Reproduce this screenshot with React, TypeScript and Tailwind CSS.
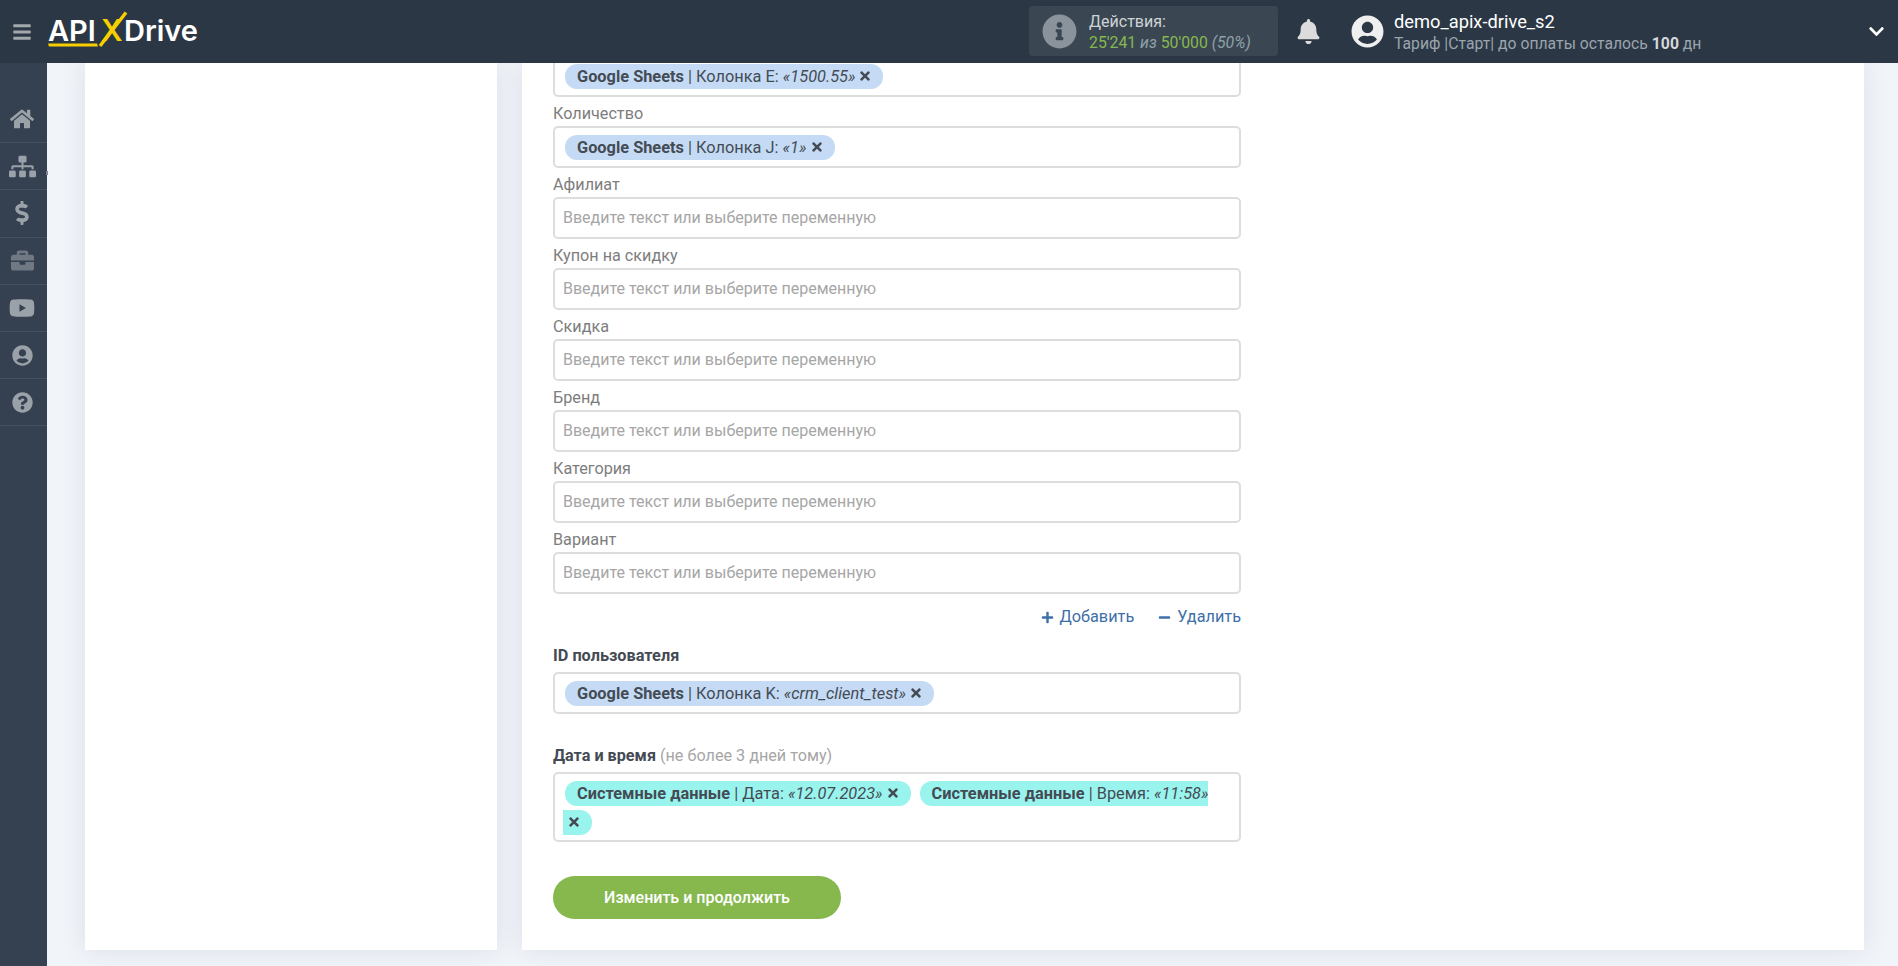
import { ReactNode } from "react";
import {
  FaBars,
  FaBell,
  FaBriefcase,
  FaChevronDown,
  FaDollarSign,
  FaHome,
  FaInfoCircle,
  FaMinus,
  FaPlus,
  FaQuestionCircle,
  FaSitemap,
  FaTimes,
  FaUserCircle,
  FaYoutube,
} from "react-icons/fa";

const PLACEHOLDER = "Введите текст или выберите переменную";

const emptyFields = ["Афилиат", "Купон на скидку", "Скидка", "Бренд", "Категория", "Вариант"];

const sideIcons = [
  { icon: <FaHome size={24} />, color: "text-[#9ba1a9]" },
  { icon: <FaSitemap size={27} />, color: "text-[#9ba1a9]" },
  { icon: <FaDollarSign size={24} />, color: "text-[#9ba1a9]" },
  { icon: <FaBriefcase size={23} />, color: "text-[#6f7883]" },
  { icon: <FaYoutube size={26} />, color: "text-[#9ba1a9]" },
  { icon: <FaUserCircle size={21} />, color: "text-[#9ba1a9]" },
  { icon: <FaQuestionCircle size={21} />, color: "text-[#9ba1a9]" },
];

function Chip({
  source,
  column,
  value,
  color,
  wrapClose,
}: {
  source: string;
  column: string;
  value: string;
  color: string;
  wrapClose?: boolean;
}) {
  return (
    <span className={`ml-[2px] mr-[7px] py-[3px] pl-[12px] pr-[11px] rounded-[12px] text-[16.35px] text-[#444b54] ${color}`}>
      <b className="font-bold">{source}</b> | {column}: <i className="italic">«{value}»</i>
      {wrapClose && <br />}
      <FaTimes className={`inline-block align-[-1px] ${wrapClose ? "ml-[4px]" : "ml-[3px]"}`} size={14} />
    </span>
  );
}

function BoxField({ children, tall }: { children?: ReactNode; tall?: boolean }) {
  return (
    <div
      className={`border-2 border-[#dddddd] rounded-[5px] bg-white px-[8px] leading-[29px] text-[16px] pt-[5px] ${
        tall ? "h-[70px]" : "h-[42px]"
      }`}
    >
      {children}
    </div>
  );
}

function Label({ children }: { children: ReactNode }) {
  return <div className="h-[29px] pt-[3px] leading-[27px] text-[16.2px] text-[#7d7d7d]">{children}</div>;
}

export default function App() {
  return (
    <div className="h-[966px] w-[1898px] overflow-hidden flex flex-col bg-[#f1f4f9] font-['Roboto',sans-serif]">
      <header className="h-[63px] shrink-0 bg-[#2c3745] flex items-center relative z-10">
        <div className="w-[44px] flex justify-center text-[#a3a8ad]">
          <FaBars size={20} />
        </div>
        <div className="relative w-[163px] h-[63px] font-['Inter',sans-serif] font-semibold text-[29px] leading-[61px] text-white">
          <span className="absolute left-[4px] top-0">API</span>
          <span className="absolute left-[57px] top-0 text-[#f7ce00] text-[30px]">X</span>
          <span className="absolute left-[80px] top-0">Drive</span>
          <svg className="absolute left-0 top-0" width="90" height="63" viewBox="0 0 90 63">
            <path d="M4 43.5 H53 L54 46.5 H5 Z" fill="#f7ce00" />
            <path d="M82 12.5 L56 46" stroke="#f7ce00" strokeWidth="3.4" fill="none" />
          </svg>
        </div>

        <div className="ml-[822px] -mt-[1px] w-[249px] h-[50px] rounded-[4px] bg-[#3a4753] flex items-center pl-[13px]">
          <FaInfoCircle size={35} className="text-[#8a939c] shrink-0" />
          <div className="ml-[12px] text-[15.8px] leading-[21px] pt-[1px]">
            <div className="text-[#cfd3d6] text-[16px]">Действия:</div>
            <div className="text-[#8fa0a8] whitespace-nowrap">
              <span className="text-[#86b84e]">25'241</span> <i>из</i> <span className="text-[#86b84e]">50'000</span>{" "}
              <i>(50%)</i>
            </div>
          </div>
        </div>

        <FaBell size={25} className="ml-[18px] text-[#dcdcdc]" />

        <FaUserCircle size={33} className="ml-[30px] -mt-[1px] text-[#efefef]" />
        <div className="ml-[10px] whitespace-nowrap">
          <div className="text-[18.3px] leading-[24px] text-white">demo_apix-drive_s2</div>
          <div className="text-[15.75px] leading-[20px] text-[#9aa5ae]">
            Тариф |Старт| до оплаты осталось <b className="text-[#d5d9dc]">100</b> дн
          </div>
        </div>

        <FaChevronDown size={17} className="absolute left-[1868px] top-[23px] text-white" />
      </header>

      <div className="flex-1 flex min-h-0">
        <aside className="w-[47px] shrink-0 bg-[#354150] pt-[33px] relative">
          {sideIcons.map((item, i) => (
            <div
              key={i}
              className={`h-[47.2px] pr-[3px] flex items-center justify-center border-b border-[#465160] ${item.color}`}
            >
              {item.icon}
            </div>
          ))}
          <span className="absolute left-[46px] top-[108px] w-[2px] h-[4px] bg-[#7d8590]" />
        </aside>

        <main className="flex-1 flex gap-[25px] pl-[38px] pr-[34px] pb-[16px] min-w-0 overflow-hidden">
          <section className="w-[412px] shrink-0 bg-white shadow-[0_0_24px_rgba(40,60,90,0.10)]" />

          <section className="flex-1 bg-white shadow-[0_0_24px_rgba(40,60,90,0.10)] pl-[31px] overflow-hidden">
            <div className="w-[688px] -mt-[8px]">
              <BoxField>
                <Chip source="Google Sheets" column="Колонка E" value="1500.55" color="bg-[#c5dbf5]" />
              </BoxField>

              <Label>Количество</Label>
              <BoxField>
                <Chip source="Google Sheets" column="Колонка J" value="1" color="bg-[#c5dbf5]" />
              </BoxField>

              {emptyFields.map((name) => (
                <div key={name}>
                  <Label>{name}</Label>
                  <div className="h-[42px] border-2 border-[#dddddd] rounded-[5px] px-[8px] flex items-center text-[16px] text-[#a6a6a6]">
                    {PLACEHOLDER}
                  </div>
                </div>
              ))}

              <div className="mt-[12px] h-[23px] flex justify-end items-center gap-[24px] text-[16.3px] text-[#3f6fa8]">
                <span className="flex items-center gap-[5px]">
                  <FaPlus size={13} /> Добавить
                </span>
                <span className="flex items-center gap-[6px]">
                  <FaMinus size={13} /> Удалить
                </span>
              </div>

              <div className="mt-[14px] h-[29px] leading-[26px] text-[16.3px] font-bold text-[#444b54]">
                ID пользователя
              </div>
              <BoxField>
                <Chip source="Google Sheets" column="Колонка K" value="crm_client_test" color="bg-[#c5dbf5]" />
              </BoxField>

              <div className="mt-[29px] h-[29px] leading-[25px] text-[16.2px] font-bold text-[#444b54]">
                Дата и время <span className="font-normal text-[#a6a6a6]">(не более 3 дней тому)</span>
              </div>
              <BoxField tall>
                <Chip source="Системные данные" column="Дата" value="12.07.2023" color="bg-[#9af4ee]" />
                <Chip source="Системные данные" column="Время" value="11:58" color="bg-[#9af4ee]" wrapClose />
              </BoxField>

              <button className="mt-[34px] block w-[288px] h-[43px] rounded-[22px] bg-[#86b84e] text-white text-[16px] font-medium">
                Изменить и продолжить
              </button>
            </div>
          </section>
        </main>
      </div>
    </div>
  );
}
